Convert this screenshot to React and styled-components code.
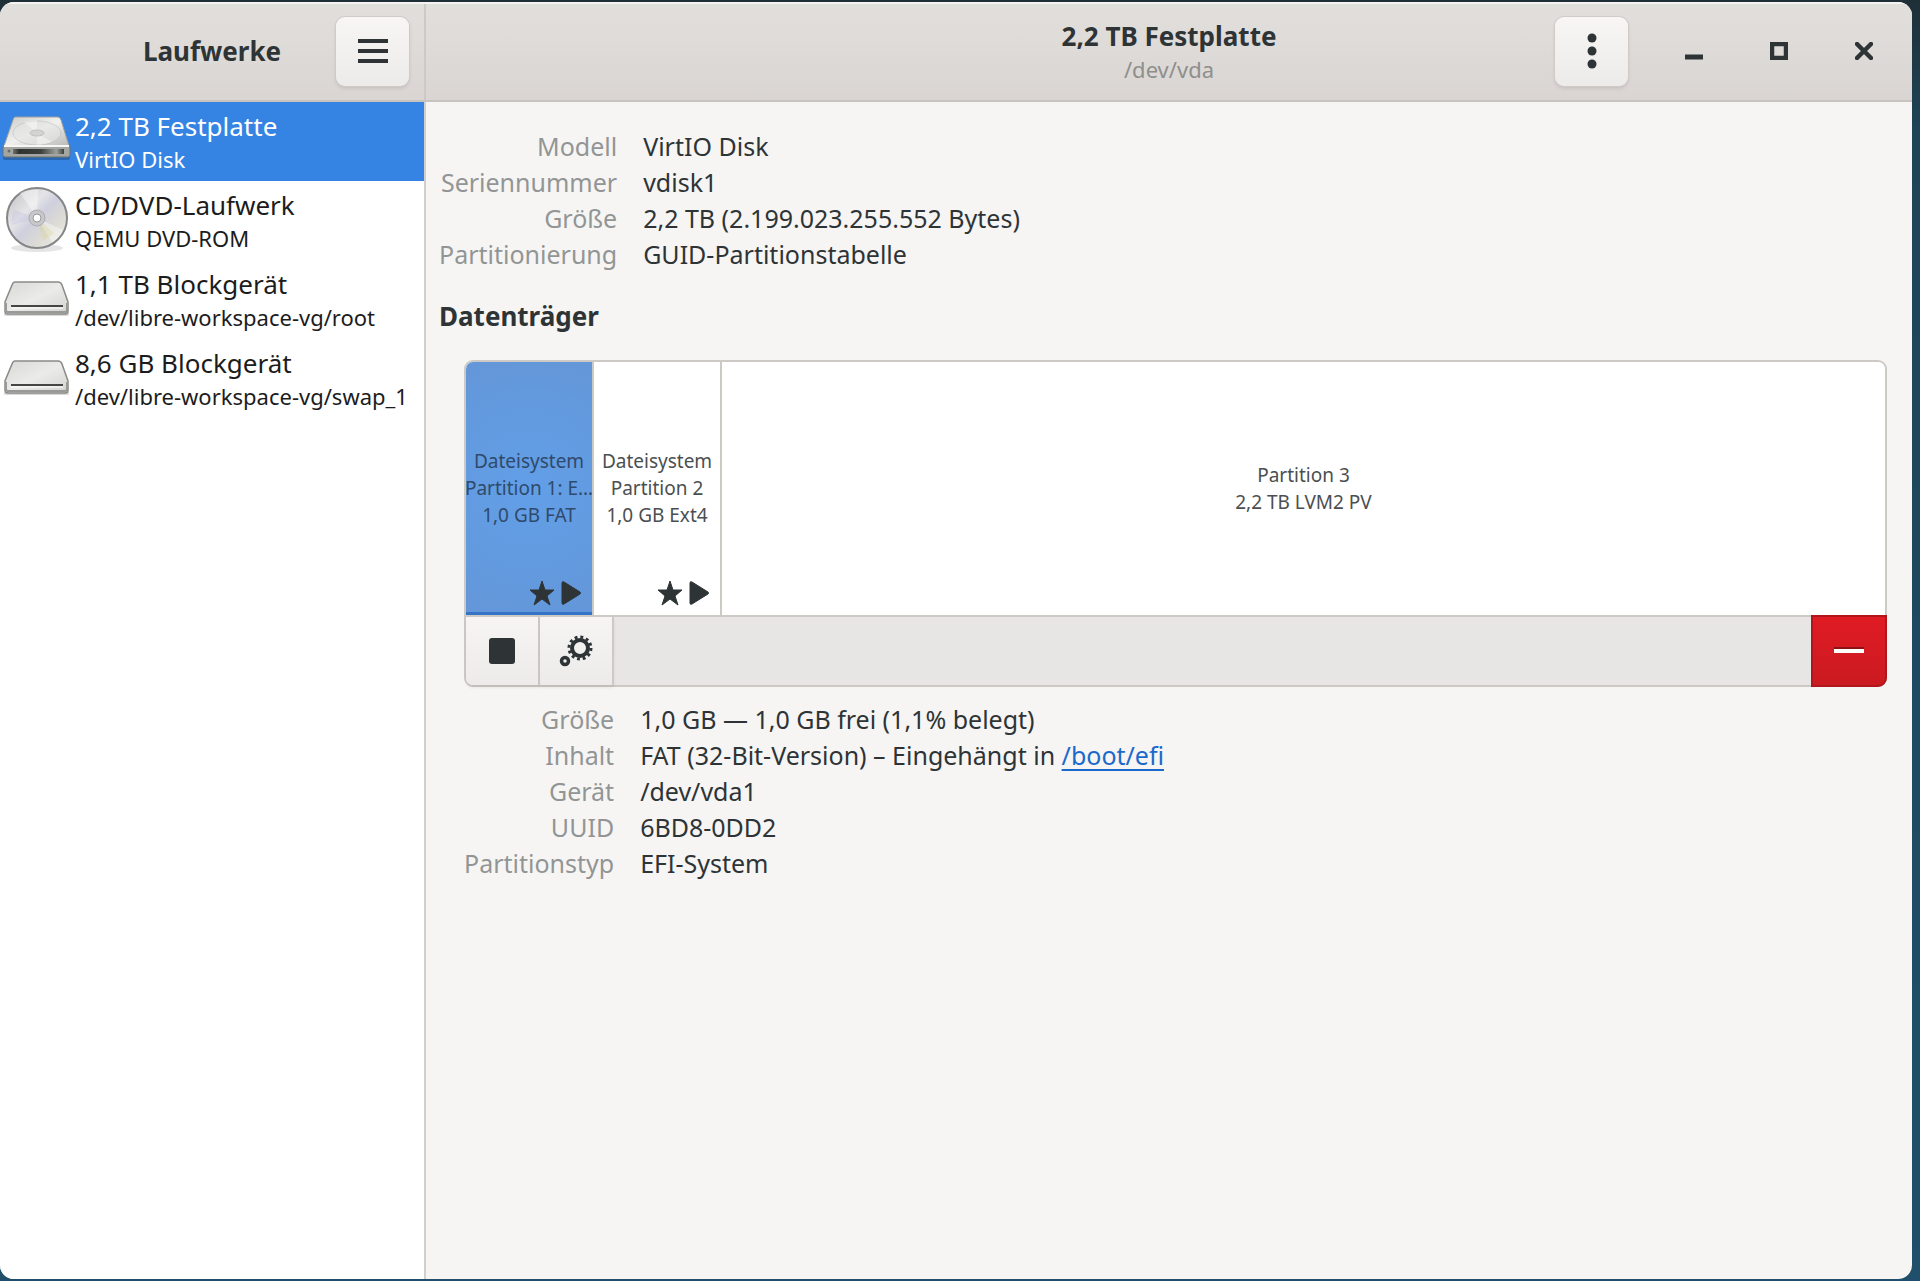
import React, { useState } from "react";
import styled, { createGlobalStyle, css } from "styled-components";

const GlobalStyle = createGlobalStyle`
  * {
    box-sizing: border-box;
  }

  body {
    margin: 0;
    background: linear-gradient(#1e2f38, #1e4457 10%, #1f4f6a);
    font-family: "Noto Sans", sans-serif;
    font-size: 26px;
    line-height: 36px;
    color: #2e3436;
  }

  button {
    font: inherit;
    color: inherit;
    margin: 0;
    padding: 0;
    border: 0;
    background: none;
  }
`;

const Desktop = styled.div`
  min-height: 100vh;
  display: flex;
  padding: 2px 8px 2px 0;
`;

const Window = styled.div`
  flex: 1;
  display: flex;
  flex-direction: column;
  border-radius: 14px;
  overflow: hidden;
  background: #f6f5f4;
`;

const HeaderBar = styled.header`
  display: flex;
  height: 100px;
  background: linear-gradient(#e1dfdc, #dad5d2);
  border-top: 2px solid #f5f4f3;
  border-bottom: 2px solid #c8c3bf;
`;

const HeaderSide = styled.div`
  width: 426px;
  flex: none;
  display: grid;
  grid-template-columns: 1fr auto 1fr;
  align-items: center;
  padding: 0 15px 2px;
  border-right: 2px solid #cec9c5;
`;

const HeaderMain = styled.div`
  flex: 1;
  display: grid;
  grid-template-columns: 1fr auto 1fr;
  align-items: center;
  padding: 0 15px 2px;
`;

const Title = styled.h1`
  grid-column: 2;
  margin: 0;
  font-size: 26px;
  font-weight: bold;
  text-align: center;
`;

const TitleBlock = styled.div`
  grid-column: 2;
  text-align: center;
`;

const Subtitle = styled.div`
  font-size: 22px;
  line-height: 31px;
  color: #8f8f8d;
`;

const HeaderActions = styled.div`
  grid-column: 3;
  display: flex;
  justify-content: flex-end;
  align-items: center;
  gap: 18px;
`;

const RaisedButton = styled.button`
  width: 73px;
  height: 69px;
  display: flex;
  align-items: center;
  justify-content: center;
  border-radius: 9px;
  background: linear-gradient(#f7f6f5, #edebe9);
  box-shadow: 0 0 0 1px #d0cbc7, 0 2px 4px rgba(0, 0, 0, 0.12);
`;

const WindowControls = styled.div`
  display: flex;
  gap: 18px;
  margin-left: 14px;
`;

const WindowButton = styled.button`
  width: 67px;
  height: 69px;
  display: flex;
  align-items: center;
  justify-content: center;
`;

const Body = styled.div`
  flex: 1;
  display: flex;
`;

const Sidebar = styled.nav`
  width: 426px;
  flex: none;
  background: #fff;
  border-right: 2px solid #d2cfcc;

  ul {
    list-style: none;
    margin: 0;
    padding: 0;
  }
`;

const DriveButton = styled.button`
  width: 100%;
  height: 79px;
  display: flex;
  align-items: center;
  gap: 1px;
  text-align: left;
  white-space: nowrap;
  color: #1c1c1c;

  ${(props) =>
    props.$selected &&
    css`
      background: #3584e4;
      color: #fff;
    `}

  svg {
    flex: none;
  }
`;

const DriveName = styled.div`
  line-height: 36px;
`;

const DriveInfo = styled.div`
  font-size: 22px;
  line-height: 31px;
`;

const Main = styled.main`
  flex: 1;
  min-width: 0;
  padding: 26px 25px 0 13px;
`;

const Details = styled.dl`
  display: grid;
  grid-template-columns: max-content 1fr;
  column-gap: 26px;
  margin: 0;
  font-size: 25px;

  dt {
    text-align: right;
    color: #929595;
  }

  dd {
    margin: 0;
  }

  a {
    color: #1b6acb;
    text-decoration-thickness: 2px;
    text-underline-offset: 4px;
  }
`;

const SectionTitle = styled.h2`
  margin: 26px 0;
  font-size: 26px;
  line-height: 36px;
  font-weight: bold;
`;

const VolumeSection = styled.section`
  margin-left: 25px;
`;

const VolumeBox = styled.div`
  margin-bottom: 14px;
  border: 2px solid #cdc9c5;
  border-radius: 9px;
`;

const VolumeGrid = styled.div`
  display: flex;
  height: 253px;
  background: #fff;
  border-radius: 7px 7px 0 0;
`;

const Volume = styled.button`
  position: relative;
  min-width: 0;
  flex: ${(props) => (props.$wide ? "1" : "0 0 128px")};
  display: flex;
  flex-direction: column;
  align-items: center;
  justify-content: center;
  font-size: 19px;
  line-height: 27px;
  white-space: nowrap;
  color: #4b4f51;
  border-right: ${(props) => (props.$wide ? "0" : "2px solid #cdc9c5")};

  ${(props) =>
    props.$selected &&
    css`
      color: #2f4a6b;
      background: radial-gradient(circle, #629fe8, #6397d9 130px);
      box-shadow: inset 0 -3px #3573c6;
      border-top-left-radius: 7px;
    `}
`;

const VolumeFlags = styled.div`
  position: absolute;
  right: 10px;
  bottom: 8px;
  display: flex;
  gap: 5px;
`;

const Toolbar = styled.div`
  display: flex;
  height: 70px;
  background: #e7e6e4;
  border-top: 2px solid #cdc9c5;
  border-radius: 0 0 7px 7px;
`;

const ToolButton = styled.button`
  width: 74px;
  display: flex;
  align-items: center;
  justify-content: center;
  border-right: 2px solid #cdc9c5;
  background: linear-gradient(#f6f5f4, #edebe9);
  box-shadow: 0 3px 3px rgba(0, 0, 0, 0.06);

  &:first-child {
    border-bottom-left-radius: 7px;
  }
`;

const DeleteButton = styled.button`
  width: 76px;
  margin: -2px -2px -2px auto;
  display: flex;
  align-items: center;
  justify-content: center;
  border: 2px solid #b2161d;
  border-bottom-right-radius: 9px;
  background: linear-gradient(#e01b24, #cb1a21);
`;

const HardDiskIcon = () => (
  <svg width="74" height="79" viewBox="0 0 74 79" aria-hidden="true">
    <defs>
      <linearGradient id="hddTop" x1="0" y1="0" x2="1" y2="1">
        <stop offset="0" stopColor="#cbcbc9" />
        <stop offset="0.5" stopColor="#f1f1ef" />
        <stop offset="1" stopColor="#b9b9b6" />
      </linearGradient>
      <linearGradient id="hddFront" x1="0" x2="1">
        <stop offset="0" stopColor="#70726e" />
        <stop offset="0.12" stopColor="#30322f" />
        <stop offset="0.55" stopColor="#3d403d" />
        <stop offset="0.85" stopColor="#9ea09b" />
        <stop offset="1" stopColor="#3c3e3b" />
      </linearGradient>
    </defs>
    <path d="M3 53h67v3q0 2-3 2H6q-3 0-3-2z" fill="#000" opacity="0.22" />
    <path d="M4 43l65 0 1 2v8q0 2-2 2H5q-2 0-2-2v-8z" fill="#a5a6a2" stroke="#6f716d" />
    <path d="M15 15h43q2 0 3 3l8 26H4l9-26q1-3 2-3z" fill="url(#hddTop)" stroke="#a0a19d" />
    <ellipse cx="37" cy="31" rx="24" ry="12" fill="#e4e4e2" opacity="0.6" stroke="#bfc0bd" />
    <path d="M37 31L24 20q6-2 13-2zM37 31l15 9q-7 3-15 3z" fill="#fff" opacity="0.4" />
    <ellipse cx="37" cy="31" rx="7" ry="3" fill="#d4d4d2" stroke="#c0c1be" />
    <path d="M4 44h65" stroke="#f7f7f6" strokeWidth="2" />
    <rect x="13" y="47" width="51" height="5" fill="url(#hddFront)" />
    <circle cx="9" cy="49" r="1.5" fill="#6a6c69" />
  </svg>
);

const DiscIcon = () => (
  <svg width="74" height="79" viewBox="0 0 74 79" aria-hidden="true">
    <defs>
      <linearGradient id="discFace" x1="0" y1="0" x2="1" y2="1">
        <stop offset="0" stopColor="#bdbdbf" />
        <stop offset="0.35" stopColor="#e5e5e7" />
        <stop offset="0.5" stopColor="#cfcfde" />
        <stop offset="0.72" stopColor="#dddcd4" />
        <stop offset="1" stopColor="#f0f0f0" />
      </linearGradient>
    </defs>
    <ellipse cx="37" cy="67" rx="26" ry="4" fill="#000" opacity="0.1" />
    <circle cx="37" cy="37" r="30" fill="url(#discFace)" stroke="#858688" strokeWidth="2" />
    <path d="M37 37L20 12Q28 8 38 9zM37 37l26 12q-3 8-11 12z" fill="#fff" opacity="0.4" />
    <path d="M37 37l17 15q-5 5-11 7z" fill="#d9d593" opacity="0.35" />
    <path d="M37 37L14 29q-3 7-2 15z" fill="#b9b5de" opacity="0.25" />
    <circle cx="37" cy="37" r="8" fill="#c8c8cb" stroke="#acacb0" />
    <circle cx="37" cy="37" r="4" fill="#fff" stroke="#99999d" />
  </svg>
);

const BlockDeviceIcon = () => (
  <svg width="74" height="79" viewBox="0 0 74 79" aria-hidden="true">
    <defs>
      <linearGradient id="blockTop" x1="0" y1="0" x2="1" y2="1">
        <stop offset="0" stopColor="#d8d8d6" />
        <stop offset="0.5" stopColor="#ebebe9" />
        <stop offset="1" stopColor="#d3d3d0" />
      </linearGradient>
    </defs>
    <path d="M4 53h65v2q0 1-2 1H6q-2 0-2-1z" fill="#000" opacity="0.15" />
    <path
      d="M15 22h43q3 0 4 3l6 17v9q0 3-3 3H8q-3 0-3-3v-9l7-17q1-3 3-3z"
      fill="url(#blockTop)"
      stroke="#8a8b88"
      strokeWidth="1.5"
    />
    <path d="M6 43v7q0 2 2 2h57q2 0 2-2v-7" fill="none" stroke="#999a97" strokeWidth="2" />
    <path d="M11 46h52" stroke="#454744" strokeWidth="2" />
    <path d="M11 48h52" stroke="#fff" strokeWidth="1" />
  </svg>
);

const StarIcon = () => (
  <svg width="26" height="28" viewBox="0 0 26 28" aria-hidden="true">
    <path
      d="M13 2l3 9h9l-7 6 3 9-8-6-8 6 3-9-7-6h9z"
      fill="#2e3436"
      stroke="#2e3436"
      strokeLinejoin="round"
    />
  </svg>
);

const PlayIcon = () => (
  <svg width="22" height="28" viewBox="0 0 22 28" aria-hidden="true">
    <path
      d="M2 4v20q0 2 2 1l16-10q1-1 0-2L4 3Q2 2 2 4z"
      fill="#2e3436"
      stroke="#2e3436"
      strokeLinejoin="round"
    />
  </svg>
);

const GearsIcon = () => (
  <svg width="34" height="34" viewBox="0 0 34 34" aria-hidden="true">
    <g fill="none" stroke="#2e3436">
      <circle cx="21" cy="14" r="8" strokeWidth="4" />
      <circle cx="21" cy="14" r="11" strokeWidth="3" strokeDasharray="2.88 2.88" />
      <circle cx="6" cy="27" r="3.5" strokeWidth="3.5" />
    </g>
  </svg>
);

const drives = [
  { name: "2,2 TB Festplatte", info: "VirtIO Disk", Icon: HardDiskIcon },
  { name: "CD/DVD-Laufwerk", info: "QEMU DVD-ROM", Icon: DiscIcon },
  { name: "1,1 TB Blockgerät", info: "/dev/libre-workspace-vg/root", Icon: BlockDeviceIcon },
  { name: "8,6 GB Blockgerät", info: "/dev/libre-workspace-vg/swap_1", Icon: BlockDeviceIcon },
];

const volumes = [
  { lines: ["Dateisystem", "Partition 1: E…", "1,0 GB FAT"], mounted: true },
  { lines: ["Dateisystem", "Partition 2", "1,0 GB Ext4"], mounted: true },
  { lines: ["Partition 3", "2,2 TB LVM2 PV"], wide: true },
];

function App() {
  const [drive, setDrive] = useState(0);
  const [volume, setVolume] = useState(0);

  return (
    <Desktop>
      <GlobalStyle />
      <Window>
        <HeaderBar>
          <HeaderSide>
            <Title>Laufwerke</Title>
            <HeaderActions>
              <RaisedButton aria-label="Menü">
                <svg width="30" height="28" viewBox="0 0 30 28" aria-hidden="true">
                  <path d="M0 4h30M0 14h30M0 24h30" stroke="#2e3436" strokeWidth="4" />
                </svg>
              </RaisedButton>
            </HeaderActions>
          </HeaderSide>
          <HeaderMain>
            <TitleBlock>
              <Title>2,2 TB Festplatte</Title>
              <Subtitle>/dev/vda</Subtitle>
            </TitleBlock>
            <HeaderActions>
              <RaisedButton aria-label="Laufwerksoptionen">
                <svg width="10" height="36" viewBox="0 0 10 36" fill="#2e3436" aria-hidden="true">
                  <circle cx="5" cy="5" r="4.5" />
                  <circle cx="5" cy="18" r="4.5" />
                  <circle cx="5" cy="31" r="4.5" />
                </svg>
              </RaisedButton>
              <WindowControls>
                <WindowButton aria-label="Minimieren">
                  <svg width="18" height="18" viewBox="0 0 18 18" aria-hidden="true">
                    <path d="M0 15h18" stroke="#2e3436" strokeWidth="5" />
                  </svg>
                </WindowButton>
                <WindowButton aria-label="Maximieren">
                  <svg width="18" height="18" viewBox="0 0 18 18" aria-hidden="true">
                    <path d="M2 2h14v14H2z" fill="none" stroke="#2e3436" strokeWidth="4.5" />
                  </svg>
                </WindowButton>
                <WindowButton aria-label="Schließen">
                  <svg width="18" height="18" viewBox="0 0 18 18" aria-hidden="true">
                    <path
                      d="M2 2l14 14M16 2L2 16"
                      stroke="#2e3436"
                      strokeWidth="4.5"
                      strokeLinecap="round"
                    />
                  </svg>
                </WindowButton>
              </WindowControls>
            </HeaderActions>
          </HeaderMain>
        </HeaderBar>

        <Body>
          <Sidebar>
            <ul>
              {drives.map(({ name, info, Icon }, i) => (
                <li key={name}>
                  <DriveButton $selected={i === drive} onClick={() => setDrive(i)}>
                    <Icon />
                    <div>
                      <DriveName>{name}</DriveName>
                      <DriveInfo>{info}</DriveInfo>
                    </div>
                  </DriveButton>
                </li>
              ))}
            </ul>
          </Sidebar>

          <Main>
            <Details>
              <dt>Modell</dt>
              <dd>VirtIO Disk</dd>
              <dt>Seriennummer</dt>
              <dd>vdisk1</dd>
              <dt>Größe</dt>
              <dd>2,2 TB (2.199.023.255.552 Bytes)</dd>
              <dt>Partitionierung</dt>
              <dd>GUID-Partitionstabelle</dd>
            </Details>

            <SectionTitle>Datenträger</SectionTitle>

            <VolumeSection>
              <VolumeBox>
                <VolumeGrid>
                  {volumes.map((v, i) => (
                    <Volume
                      key={i}
                      $wide={v.wide}
                      $selected={i === volume}
                      onClick={() => setVolume(i)}
                    >
                      {v.lines.map((line) => (
                        <span key={line}>{line}</span>
                      ))}
                      {v.mounted && (
                        <VolumeFlags>
                          <StarIcon />
                          <PlayIcon />
                        </VolumeFlags>
                      )}
                    </Volume>
                  ))}
                </VolumeGrid>
                <Toolbar>
                  <ToolButton aria-label="Aushängen">
                    <svg width="26" height="26" viewBox="0 0 26 26" aria-hidden="true">
                      <rect width="26" height="26" rx="3" fill="#2e3436" />
                    </svg>
                  </ToolButton>
                  <ToolButton aria-label="Partitionsoptionen">
                    <GearsIcon />
                  </ToolButton>
                  <DeleteButton aria-label="Partition löschen">
                    <svg width="32" height="8" viewBox="0 0 32 8" aria-hidden="true">
                      <path d="M1 1h30" stroke="#8f1118" strokeWidth="2" />
                      <path d="M1 4h30" stroke="#fff" strokeWidth="4" />
                    </svg>
                  </DeleteButton>
                </Toolbar>
              </VolumeBox>

              <Details>
                <dt>Größe</dt>
                <dd>1,0 GB — 1,0 GB frei (1,1% belegt)</dd>
                <dt>Inhalt</dt>
                <dd>
                  FAT (32-Bit-Version) – Eingehängt in <a href="#efi">/boot/efi</a>
                </dd>
                <dt>Gerät</dt>
                <dd>/dev/vda1</dd>
                <dt>UUID</dt>
                <dd>6BD8-0DD2</dd>
                <dt>Partitionstyp</dt>
                <dd>EFI-System</dd>
              </Details>
            </VolumeSection>
          </Main>
        </Body>
      </Window>
    </Desktop>
  );
}

export default App;
